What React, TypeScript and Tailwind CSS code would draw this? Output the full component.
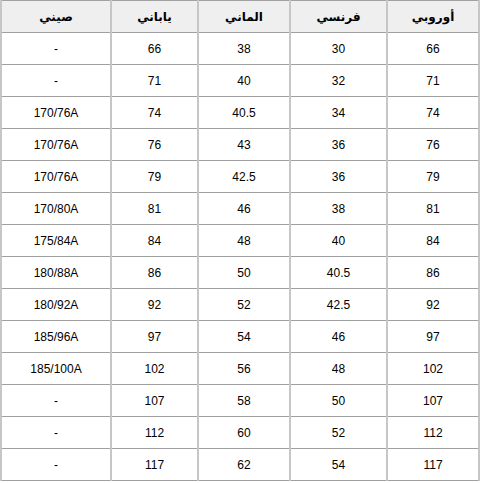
const headers = ["أوروبي", "فرنسي", "الماني", "ياباني", "صيني"];

const widths = ["w-[92px]", "w-[97px]", "w-[92px]", "w-[87px]", "w-[110px]"];

const rows: string[][] = [
  ["66", "30", "38", "66", "-"],
  ["71", "32", "40", "71", "-"],
  ["74", "34", "40.5", "74", "170/76A"],
  ["76", "36", "43", "76", "170/76A"],
  ["79", "36", "42.5", "79", "170/76A"],
  ["81", "38", "46", "81", "170/80A"],
  ["84", "40", "48", "84", "175/84A"],
  ["86", "40.5", "50", "86", "180/88A"],
  ["92", "42.5", "52", "92", "180/92A"],
  ["97", "46", "54", "97", "185/96A"],
  ["102", "48", "56", "102", "185/100A"],
  ["107", "50", "58", "107", "-"],
  ["112", "52", "60", "112", "-"],
  ["117", "54", "62", "117", "-"],
];

const cell =
  "h-[32px] p-0 text-center align-middle border-x-2 border-x-[#c6c6c6] border-y border-y-[#a0a0a0]";

export default function App() {
  return (
    <div className="w-[480px] h-[483px] bg-white">
      <table
        dir="rtl"
        className="w-[479px] table-fixed border-collapse text-[12px] text-black font-['Liberation_Sans','DejaVu_Sans',sans-serif]"
      >
        <colgroup>
          {widths.map((w, i) => (
            <col key={i} className={w} />
          ))}
        </colgroup>
        <thead>
          <tr className="bg-[#efefef]">
            {headers.map((h) => (
              <th
                key={h}
                className={`${cell} font-bold text-[12px] font-['DejaVu_Sans',sans-serif]`}
              >
                {h}
              </th>
            ))}
          </tr>
        </thead>
        <tbody>
          {rows.map((r, i) => (
            <tr key={i}>
              {r.map((v, j) => (
                <td key={j} className={cell}>
                  {v}
                </td>
              ))}
            </tr>
          ))}
        </tbody>
      </table>
    </div>
  );
}
